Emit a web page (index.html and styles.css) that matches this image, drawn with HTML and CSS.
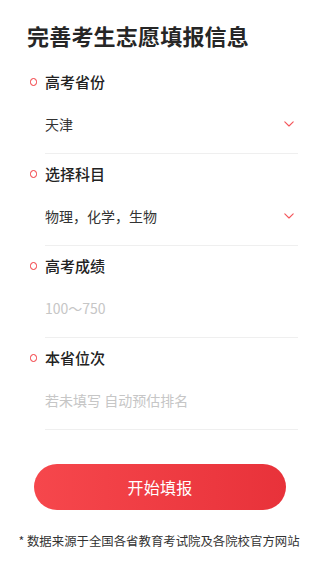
FILE: index.html
```html
<!DOCTYPE html>
<html lang="zh-CN">
<head>
<meta charset="utf-8">
<meta name="viewport" content="width=device-width, initial-scale=1">
<title>完善考生志愿填报信息</title>
<link rel="stylesheet" href="styles.css">
</head>
<body>
<main class="page">
  <h1 class="title">完善考生志愿填报信息</h1>

  <section class="field">
    <div class="field-label"><span class="dot"></span>高考省份</div>
    <div class="field-body">
      <span class="value">天津</span>
      <svg class="chev" width="10" height="6" viewBox="0 0 10 6"><polyline points="0.8,0.8 5,5 9.2,0.8" fill="none" stroke="#f4555a" stroke-width="1.1" stroke-linecap="round" stroke-linejoin="round"/></svg>
    </div>
  </section>

  <section class="field">
    <div class="field-label"><span class="dot"></span>选择科目</div>
    <div class="field-body">
      <span class="value">物理，化学，生物</span>
      <svg class="chev" width="10" height="6" viewBox="0 0 10 6"><polyline points="0.8,0.8 5,5 9.2,0.8" fill="none" stroke="#f4555a" stroke-width="1.1" stroke-linecap="round" stroke-linejoin="round"/></svg>
    </div>
  </section>

  <section class="field">
    <div class="field-label"><span class="dot"></span>高考成绩</div>
    <div class="field-body">
      <span class="value placeholder">100～750</span>
    </div>
  </section>

  <section class="field">
    <div class="field-label"><span class="dot"></span>本省位次</div>
    <div class="field-body">
      <span class="value placeholder">若未填写 自动预估排名</span>
    </div>
  </section>

  <div class="actions">
    <button class="btn" type="button">开始填报</button>
  </div>

  <p class="note">* 数据来源于全国各省教育考试院及各院校官方网站</p>
</main>
</body>
</html>
```

FILE: styles.css
```css
* { box-sizing: border-box; }

html, body {
  margin: 0;
  padding: 0;
  background: #ffffff;
}

body {
  font-family: "Noto Sans CJK SC", "Noto Sans", "Liberation Sans", sans-serif;
  color: #222222;
  width: 320px;
  height: 568px;
  overflow: hidden;
}

.page {
  padding: 20px 22px 0 27px;
  display: flex;
  flex-direction: column;
}

.title {
  margin: 0;
  font-size: 22px;
  line-height: 31px;
  font-weight: 700;
  color: #262626;
  letter-spacing: 0.2px;
}

.field {
  margin-top: 8px;
}

.field:first-of-type {
  margin-top: 19px;
}

.field-label {
  display: flex;
  align-items: center;
  gap: 8px;
  font-size: 15px;
  line-height: 24px;
  font-weight: 500;
  color: #222222;
}

.dot {
  width: 7.5px;
  height: 7.5px;
  margin-left: 2.5px;
  border: 1.8px solid #f2353a;
  border-radius: 50%;
  flex: none;
}

.field-body {
  margin-left: 18px;
  margin-top: 20px;
  padding-bottom: 19px;
  border-bottom: 1px solid #efefef;
  display: flex;
  align-items: center;
  justify-content: space-between;
}

.value {
  font-size: 14px;
  line-height: 20px;
  color: #333333;
}

.placeholder {
  color: #c6c6c6;
}

.chev {
  margin-right: 4px;
  flex: none;
}

.actions {
  display: flex;
  justify-content: center;
  margin-top: 34px;
  margin-left: -5px;
}

.btn {
  width: 252px;
  height: 46px;
  border: none;
  border-radius: 23px;
  background: linear-gradient(90deg, #f6474c 0%, #e8323a 100%);
  color: #ffffff;
  font-family: inherit;
  font-size: 16px;
  font-weight: 400;
  letter-spacing: 0.3px;
  padding: 0;
}

.note {
  margin: 21px 0 0 -28px;
  width: 320px;
  text-align: center;
  font-size: 12.4px;
  line-height: 20px;
  color: #333333;
  white-space: nowrap;
}
```
